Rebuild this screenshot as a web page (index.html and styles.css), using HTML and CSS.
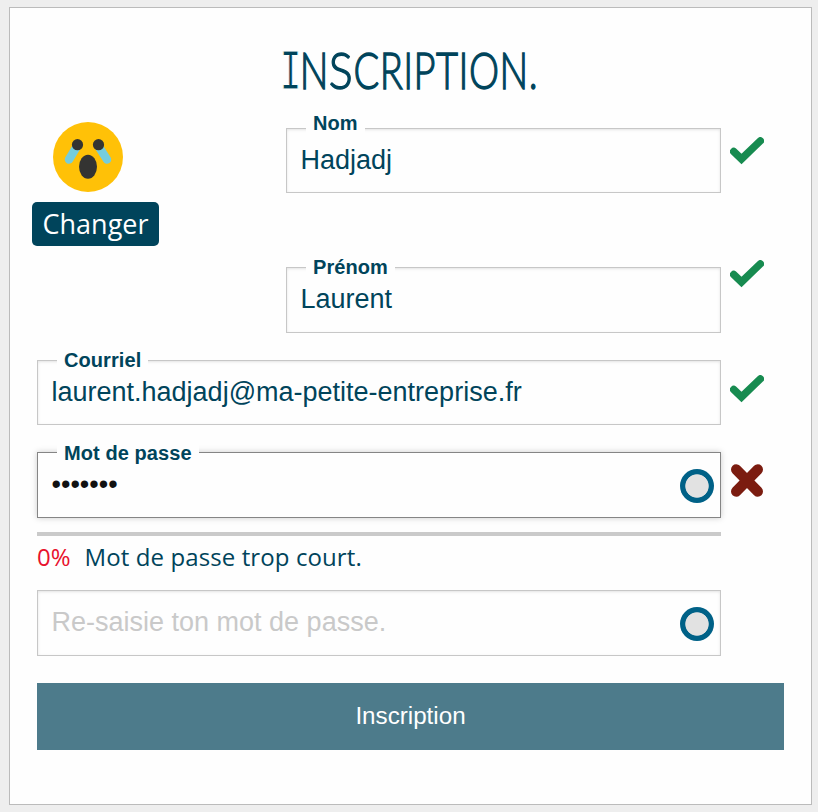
FILE: index.html
```html
<!DOCTYPE html>
<html lang="fr">
<head>
<meta charset="utf-8">
<title>Inscription</title>
<link rel="stylesheet" href="styles.css">
</head>
<body>
<svg class="defs" width="0" height="0">
  <symbol id="check" viewBox="0 0 34 28"><path d="M3.7 14.5 L11.5 22 L30.3 3.9" fill="none" stroke="#178b50" stroke-width="7.5" stroke-linecap="round"/></symbol>
</svg>
<main class="card">
  <h1 class="title"><span class="title-text"><span class="cap">I</span>N<span class="wide">S</span>CRIPTION.</span></h1>
  <form class="form">
    <div class="identity">
      <div class="avatar">
        <svg class="face" viewBox="0 0 70 70">
          <circle cx="35" cy="35" r="35" fill="#ffc107"/>
          <path d="M23.5 25 L16 37.500 M46 25 L54 37.500" stroke="#75cddc" stroke-width="8.500" stroke-linecap="round"/>
          <circle cx="24.500" cy="22.700" r="5.600" fill="#343432"/>
          <circle cx="45.500" cy="22.700" r="5.600" fill="#343432"/>
          <ellipse cx="35" cy="44.700" rx="9" ry="12" fill="#343432"/>
        </svg>
        <button type="button" class="change">Changer</button>
      </div>
      <div class="names">
        <div class="row first">
          <div class="field"><span class="label">Nom</span><span class="value">Hadjadj</span></div>
          <svg class="check"><use href="#check"/></svg>
        </div>
        <div class="row second">
          <div class="field"><span class="label">Prénom</span><span class="value">Laurent</span></div>
          <svg class="check"><use href="#check"/></svg>
        </div>
      </div>
    </div>
    <div class="row mail">
      <div class="field"><span class="label">Courriel</span><span class="value">laurent.hadjadj@ma-petite-entreprise.fr</span></div>
      <svg class="check"><use href="#check"/></svg>
    </div>
    <div class="row secret">
      <div class="field focus"><span class="label">Mot de passe</span><span class="value dots">•••••••</span><span class="toggle"></span></div>
      <svg class="cross" viewBox="0 0 32 33"><path d="M5.2 5.500 L26.8 27.500 M26.8 5.500 L5.2 27.500" stroke="#7b1c10" stroke-width="10.4" stroke-linecap="round"/></svg>
    </div>
    <div class="meter"></div>
    <p class="hint"><span class="percent">0%</span><span class="message">Mot de passe trop court.</span></p>
    <div class="row">
      <div class="field"><span class="value placeholder">Re-saisie ton mot de passe.</span><span class="toggle"></span></div>
    </div>
    <button type="button" class="submit">Inscription</button>
  </form>
</main>
</body>
</html>
```

FILE: styles.css
```css
* { box-sizing: border-box; }
body { margin: 0; padding: 7px 6px 7px 9px; background: #eee; color: #00445b; font-family: "Liberation Sans", Arial, sans-serif; }
.defs { display: none; }
.card { height: 798px; border: 1px solid #bbb; background: #fefefe; padding: 30px 27px; }
.title { margin: 0; height: 66px; display: flex; justify-content: center; font: 300 52px/64px Lato, sans-serif; }
.title-text { flex: none; white-space: nowrap; letter-spacing: .7px; transform: translate(-2px, -1px) scaleX(.73); -webkit-text-stroke: 1.4px #00445b; }
.cap { display: inline-block; transform: scaleX(.85); font-family: "Liberation Mono", monospace; font-size: 58px; line-height: 1; letter-spacing: -5px; -webkit-text-stroke: 1px #fefefe; }
.wide { display: inline-block; margin: 0 2.5px; transform: scaleX(1.18); }
.form { width: 747px; }
.identity { display: flex; justify-content: space-between; padding-top: 18px; }
.avatar { width: 127px; margin-left: -5px; display: flex; flex-direction: column; align-items: center; }
.face { width: 70px; height: 70px; margin-right: 15px; }
.change { width: 127px; height: 44px; margin-top: 10px; padding: 0; border: 0; border-radius: 5px; background: #00445b; color: #fff; font: 27px/44px "Open Sans", sans-serif; }
.names { width: 498px; padding-top: 6px; }
.row { display: flex; align-items: flex-start; gap: 9px; }
.second { margin-top: 74px; }
.mail { margin-top: 27px; }
.secret { margin-top: 27px; }
.field { position: relative; flex: 1; max-width: 684px; height: 66px; display: flex; align-items: flex-start; justify-content: space-between; padding: 15px 6px 0 13.5px; border: 1px solid #c7c7c7; box-shadow: inset 0 1px 3px rgba(0,0,0,.11); }
.names .field { max-width: 435px; }
.first .field, .mail .field { height: 65px; }
.focus { border-color: #858585; box-shadow: 0 0 6px #ccc; }
.label { position: absolute; left: 19px; top: -13px; padding: 0 7px; background: #fefefe; font: bold 20px/24px "Liberation Sans", Arial, sans-serif; letter-spacing: .08px; }
.first .label { top: -18px; }
.secret .label { top: -12px; }
.value { font-size: 27px; line-height: 32px; white-space: nowrap; }
.dots { color: #111; }
.placeholder { color: #c9c9c9; }
.toggle { width: 34px; height: 34px; margin-top: 1px; border-radius: 50%; background: radial-gradient(circle, #e2e2e2 11.3px, #006187 12.1px); }
.check { flex: none; width: 34px; height: 28px; margin-top: 9px; }
.second .check { margin-top: -7px; }
.mail .check { margin-top: 15px; }
.cross { flex: none; width: 32px; height: 33px; margin: 12px 0 0 1px; }
.meter { width: 684px; height: 4px; margin-top: 14px; background: #cacaca; }
.hint { display: flex; gap: 14px; margin: 0; height: 54px; padding-top: 4px; font: 24px/33px "Open Sans", sans-serif; }
.percent { color: #e8112d; }
.message { letter-spacing: .1px; }
.submit { display: block; width: 747px; height: 67px; margin-top: 27px; padding: 0 0 2px; border: 0; background: #4d7b8b; color: #fff; font: 24.2px/65px "Liberation Sans", Arial, sans-serif; }
```
